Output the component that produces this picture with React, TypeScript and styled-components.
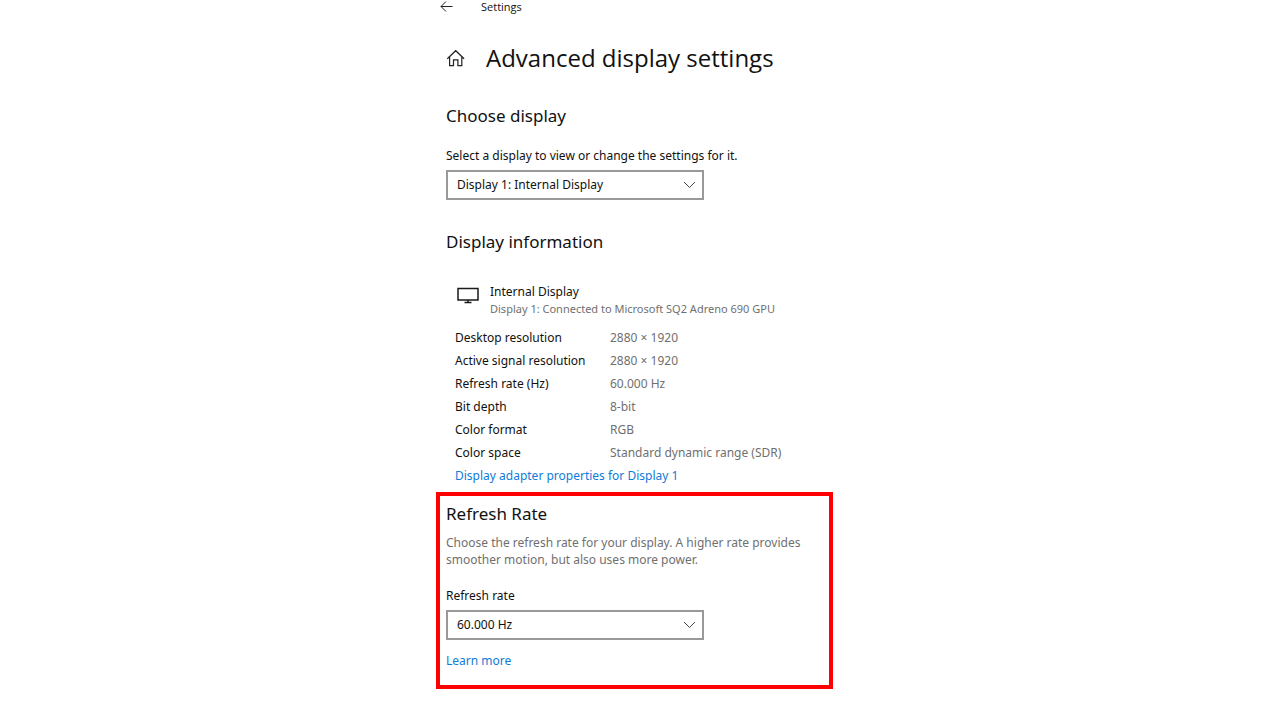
import React from "react";
import styled, { createGlobalStyle } from "styled-components";

const GlobalStyle = createGlobalStyle`
  *, *::before, *::after { box-sizing: border-box; }
  body {
    margin: 0;
    background: #ffffff;
    color: #111111;
    font-family: "Noto Sans", "Open Sans", sans-serif;
    font-size: 12px;
    line-height: 20px;
  }
`;

const Page = styled.main`
  max-width: 408px;
  margin: 0 auto;
`;

const TopBar = styled.header`
  display: flex;
  align-items: center;
  gap: 28px;
  height: 14px;
  padding-left: 4px;
`;

const IconButton = styled.button`
  display: flex;
  flex: none;
  padding: 0;
  border: 0;
  background: none;
  color: #222222;
`;

const AppName = styled.span`
  font-family: "Open Sans", sans-serif;
  font-size: 11px;
  line-height: 14px;
`;

const TitleRow = styled.div`
  display: flex;
  align-items: center;
  gap: 21px;
  margin-top: 24px;
  padding-left: 10px;
`;

const Title = styled.h1`
  margin: 0;
  font-family: "Open Sans", sans-serif;
  font-size: 24px;
  line-height: 40px;
  font-weight: 400;
  white-space: nowrap;
`;

const Section = styled.section`
  padding: 24px 0 4px 10px;
`;

const Heading = styled.h2`
  margin: 0;
  font-size: 17px;
  line-height: 28px;
  font-weight: 400;
`;

const Field = styled.div`
  display: flex;
  flex-direction: column;
  gap: 4px;
  margin-top: 16px;
`;

const Label = styled.label`
  color: #111111;
`;

const SelectBox = styled.div`
  display: grid;
  align-items: center;
  width: 258px;
  max-width: 100%;

  > * { grid-area: 1 / 1; }
  > svg {
    justify-self: end;
    margin-right: 8px;
    pointer-events: none;
  }
`;

const Select = styled.select`
  appearance: none;
  width: 100%;
  height: 30px;
  padding: 0 32px 0 9px;
  border: 2px solid #999999;
  border-radius: 0;
  background: #ffffff;
  color: #111111;
  font: inherit;
`;

const Device = styled.div`
  display: flex;
  gap: 11px;
  margin-top: 27px;
  padding-left: 11px;
  line-height: 17px;

  > svg { flex: none; margin-top: 4px; }
`;

const DeviceNote = styled.div`
  color: #707070;
  font-size: 11px;
`;

const Details = styled.table`
  margin: 9px 0 0 9px;
  border-collapse: collapse;
  line-height: 23px;

  th, td { padding: 0; font-weight: inherit; text-align: left; white-space: nowrap; }
  th { width: 155px; }
  td { color: #707070; }
`;

const Link = styled.a`
  color: #0f7bd8;
  text-decoration: none;
`;

const AdapterLink = styled(Link)`
  display: block;
  margin-left: 9px;
  line-height: 23px;
`;

const Highlight = styled.section`
  max-width: 397px;
  margin-top: 1px;
  padding: 4px 6px 14px;
  border: 4px solid #ff0000;
`;

const Description = styled.p`
  margin: 6px 0 0;
  color: #707070;
  line-height: 17px;

  + ${Field} { margin-top: 18px; }
`;

const LearnMore = styled(Link)`
  display: inline-block;
  margin-top: 11px;
`;

const Chevron = () => (
  <svg width="13" height="8" viewBox="0 0 13 8" fill="none" stroke="#444444" aria-hidden="true">
    <path d="M1 1l5.5 5.5L12 1" />
  </svg>
);

const rows = [
  ["Desktop resolution", "2880 × 1920"],
  ["Active signal resolution", "2880 × 1920"],
  ["Refresh rate (Hz)", "60.000 Hz"],
  ["Bit depth", "8-bit"],
  ["Color format", "RGB"],
  ["Color space", "Standard dynamic range (SDR)"],
];

type DropDownProps = { id: string; label: string; value: string };

const DropDown = ({ id, label, value }: DropDownProps) => (
  <Field>
    <Label htmlFor={id}>{label}</Label>
    <SelectBox>
      <Select id={id} defaultValue={value}>
        <option>{value}</option>
      </Select>
      <Chevron />
    </SelectBox>
  </Field>
);

export default function App() {
  return (
    <>
      <GlobalStyle />
      <Page>
        <TopBar>
          <IconButton aria-label="Back">
            <svg width="13" height="12" viewBox="0 0 13 12" fill="none" stroke="currentColor">
              <path d="M6 0.5L1 5.5l5 5M1 5.5h11.5" />
            </svg>
          </IconButton>
          <AppName>Settings</AppName>
        </TopBar>
        <TitleRow>
          <IconButton aria-label="Home">
            <svg width="19" height="18" viewBox="0 0 19 18" fill="none" stroke="currentColor" strokeWidth="1.2">
              <path d="M1.3 9.8L9.7 1.7L18.1 9.8M3.6 7.8v8.9h3.9v-5.8h4.4v5.8h3.9V7.8" />
            </svg>
          </IconButton>
          <Title>Advanced display settings</Title>
        </TitleRow>

        <Section>
          <Heading>Choose display</Heading>
          <DropDown
            id="display"
            label="Select a display to view or change the settings for it."
            value="Display 1: Internal Display"
          />
        </Section>

        <Section>
          <Heading>Display information</Heading>
          <Device>
            <svg width="22" height="17" viewBox="0 0 22 17" fill="none" stroke="#1a1a1a" strokeWidth="1.5" aria-hidden="true">
              <path d="M1 1.5h20v11.5H1zM11 13v2.5M7.5 15.5h7" />
            </svg>
            <div>
              <div>Internal Display</div>
              <DeviceNote>Display 1: Connected to Microsoft SQ2 Adreno 690 GPU</DeviceNote>
            </div>
          </Device>
          <Details>
            <tbody>
              {rows.map(([name, value]) => (
                <tr key={name}>
                  <th scope="row">{name}</th>
                  <td>{value}</td>
                </tr>
              ))}
            </tbody>
          </Details>
          <AdapterLink href="#adapter">Display adapter properties for Display 1</AdapterLink>
        </Section>

        <Highlight>
          <Heading>Refresh Rate</Heading>
          <Description>
            Choose the refresh rate for your display. A higher rate provides smoother motion, but also uses more power.
          </Description>
          <DropDown id="refresh-rate" label="Refresh rate" value="60.000 Hz" />
          <LearnMore href="#learn-more">Learn more</LearnMore>
        </Highlight>
      </Page>
    </>
  );
}
